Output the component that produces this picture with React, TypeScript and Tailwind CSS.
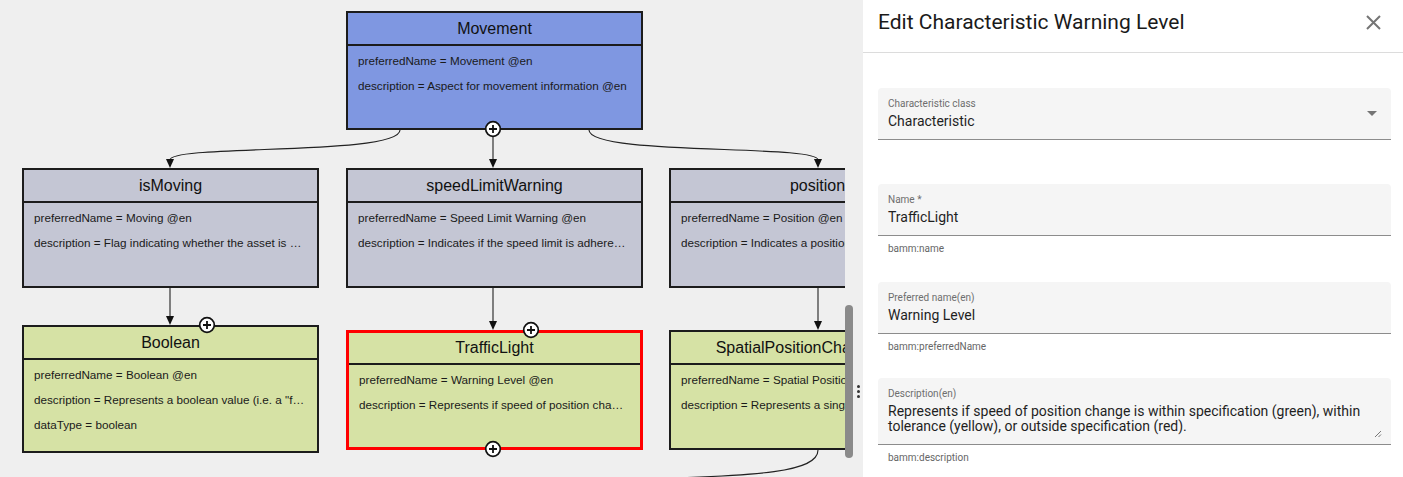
import React from 'react';

interface NodeProps {
  x: number;
  y: number;
  h: number;
  title: string;
  lines: string[];
  tone: 'aspect' | 'property' | 'characteristic';
  selected?: boolean;
}

const toneClass = {
  aspect: 'bg-[#7f97e1]',
  property: 'bg-[#c4c6d4]',
  characteristic: 'bg-[#d6e2a5]',
};

function DiagramNode({ x, y, h, title, lines, tone, selected }: NodeProps) {
  return (
    <div
      className={`absolute w-[297px] flex flex-col ${toneClass[tone]} ${
        selected ? 'border-[3px] border-[#ff0000]' : 'border-2 border-[#1c1c1c]'
      }`}
      style={{ left: x, top: y, height: h }}
    >
      <div
        className={`${selected ? 'h-[32px]' : 'h-[33px]'} shrink-0 flex items-center justify-center border-b-2 border-[#1c1c1c] text-[16px] text-[#111] whitespace-nowrap`}
      >
        {title}
      </div>
      <div className="pt-[2px] pl-[10px] pr-[12px] text-[11.7px] leading-[25px] text-[#1a1a1a]">
        {lines.map((l, i) => (
          <div key={i} className="truncate">
            {l}
          </div>
        ))}
      </div>
    </div>
  );
}

function Arrow({ x, tip }: { x: number; tip: number }) {
  return <path d={`M${x - 4} ${tip - 9} L${x + 4} ${tip - 9} L${x} ${tip} Z`} fill="#111" />;
}

function Plus({ x, y }: { x: number; y: number }) {
  return (
    <g>
      <circle cx={x} cy={y} r={7.3} fill="#fff" stroke="#111" strokeWidth={1.7} />
      <path d={`M${x - 4} ${y} H${x + 4} M${x} ${y - 4} V${y + 4}`} stroke="#111" strokeWidth={1.8} />
    </g>
  );
}

function Field({
  label,
  value,
  hint,
  select,
}: {
  label: string;
  value: React.ReactNode;
  hint?: string;
  select?: boolean;
}) {
  return (
    <div>
      <div className="relative bg-[#f5f5f5] rounded-t-[4px] border-b border-[#8c8c8c] pt-[9px] pb-[8px] px-[10px]">
        <div className="text-[10px] leading-[14px] text-[#6e6e6e]">{label}</div>
        <div className="text-[14px] leading-[20px] text-[#1f1f1f]">{value}</div>
        {select && (
          <svg className="absolute right-[14px] top-[23px]" width="10" height="5" viewBox="0 0 10 5">
            <path d="M0 0 L10 0 L5 5 Z" fill="#757575" />
          </svg>
        )}
      </div>
      {hint && <div className="pt-[6px] px-[10px] text-[10px] leading-[14px] text-[#666]">{hint}</div>}
    </div>
  );
}

export default function App() {
  return (
    <div className="w-[1403px] h-[477px] flex overflow-hidden bg-white" style={{ fontFamily: '"Liberation Sans", Arial, sans-serif' }}>
      {/* diagram canvas */}
      <div className="w-[863px] h-full flex bg-[#efefef] shrink-0">
        <div className="relative w-[845px] h-full overflow-hidden">
          <DiagramNode
            x={346}
            y={11}
            h={119}
            tone="aspect"
            title="Movement"
            lines={['preferredName = Movement @en', 'description = Aspect for movement information @en']}
          />
          <DiagramNode
            x={22}
            y={168}
            h={120}
            tone="property"
            title="isMoving"
            lines={['preferredName = Moving @en', 'description = Flag indicating whether the asset is currently moving @en']}
          />
          <DiagramNode
            x={346}
            y={168}
            h={120}
            tone="property"
            title="speedLimitWarning"
            lines={['preferredName = Speed Limit Warning @en', 'description = Indicates if the speed limit is adhered to @en']}
          />
          <DiagramNode
            x={669}
            y={168}
            h={120}
            tone="property"
            title="position"
            lines={['preferredName = Position @en', 'description = Indicates a position of the asset @en']}
          />
          <DiagramNode
            x={22}
            y={325}
            h={128}
            tone="characteristic"
            title="Boolean"
            lines={[
              'preferredName = Boolean @en',
              'description = Represents a boolean value (i.e. a "flag") @en',
              'dataType = boolean',
            ]}
          />
          <DiagramNode
            x={346}
            y={330}
            h={120}
            tone="characteristic"
            selected
            title="TrafficLight"
            lines={['preferredName = Warning Level @en', 'description = Represents if speed of position change is within specification @en']}
          />
          <DiagramNode
            x={669}
            y={330}
            h={120}
            tone="characteristic"
            title="SpatialPositionCharacteristic"
            lines={[
              'preferredName = Spatial Position Characteristic @en',
              'description = Represents a single position in space @en',
            ]}
          />

          <svg className="absolute inset-0 pointer-events-none" width="845" height="477">
            <g fill="none" stroke="#222" strokeWidth={1.1}>
              <path d="M400 130 C400 156 170 144 170 160" />
              <path d="M493 130 V160" />
              <path d="M589 130 C589 156 818 144 818 160" />
              <path d="M170 288 V317" />
              <path d="M493 288 V322" />
              <path d="M818 288 V322" />
              <path d="M818 450 C818 472 760 476 640 479" />
            </g>
            <Arrow x={170} tip={168} />
            <Arrow x={493} tip={168} />
            <Arrow x={818} tip={168} />
            <Arrow x={170} tip={325} />
            <Arrow x={493} tip={330} />
            <Arrow x={818} tip={330} />
            <Plus x={493} y={129} />
            <Plus x={207} y={325} />
            <Plus x={531} y={330} />
            <Plus x={493} y={449} />
          </svg>
        </div>
        {/* resize handle */}
        <div className="relative w-[18px] h-full">
          <div className="absolute left-0 top-[305px] w-[8px] h-[153px] rounded-full bg-[#8a8a8a]" />
          <div className="absolute left-[12px] top-[385px] flex flex-col gap-[2px]">
            <span className="w-[3px] h-[3px] rounded-full bg-[#333]" />
            <span className="w-[3px] h-[3px] rounded-full bg-[#333]" />
            <span className="w-[3px] h-[3px] rounded-full bg-[#333]" />
          </div>
        </div>
      </div>

      {/* edit panel */}
      <div className="flex-1 h-full flex flex-col" style={{ fontFamily: 'Roboto, "Noto Sans", sans-serif' }}>
        <div className="h-[53px] shrink-0 border-b border-[#dcdcdc] flex items-start justify-between pl-[15px] pr-[22px] pt-[8px]">
          <h2 className="text-[21px] leading-[28px] text-[#1a1a1a] font-normal">Edit Characteristic Warning Level</h2>
          <svg className="mt-[7px]" width="15" height="15" viewBox="0 0 15 15">
            <path d="M1 1 L14 14 M14 1 L1 14" stroke="#757575" strokeWidth={2} />
          </svg>
        </div>
        <div className="pl-[15px] pr-[12px] pt-[35px] flex flex-col">
          <Field label="Characteristic class" value="Characteristic" select />
          <div className="mt-[44px]">
            <Field label="Name *" value="TrafficLight" hint="bamm:name" />
          </div>
          <div className="mt-[26px]">
            <Field label="Preferred name(en)" value="Warning Level" hint="bamm:preferredName" />
          </div>
          <div className="mt-[24px]">
            <Field
              label="Description(en)"
              hint="bamm:description"
              value={
                <div className="relative leading-[15px] pt-[3px] pb-[2px]">
                  Represents if speed of position change is within specification (green), within tolerance (yellow), or outside
                  specification (red).
                  <svg className="absolute right-[-1px] bottom-[-2px]" width="8" height="8" viewBox="0 0 8 8">
                    <path d="M7 1 L1 7 M7 4.5 L4.5 7" stroke="#777" strokeWidth={1} />
                  </svg>
                </div>
              }
            />
          </div>
        </div>
      </div>
    </div>
  );
}
